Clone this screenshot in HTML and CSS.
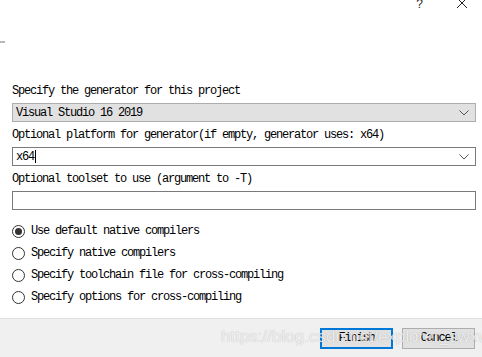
FILE: index.html
```html
<!DOCTYPE html>
<html lang="en">
<head>
    <meta charset="UTF-8">
    <title>CMake Setup</title>
    <link rel="stylesheet" href="styles.css">
</head>
<body>
    <div class="titlebar">
        <span class="help">?</span>
        <span class="close">
            <svg width="12" height="12" viewBox="0 0 12 12"><path d="M1 1L11 11M11 1L1 11" stroke="#222" stroke-width="1"/></svg>
        </span>
    </div>
    <div class="dash"></div>

    <div class="content">
        <div class="label">Specify the generator for this project</div>
        <div class="combo combo-gray">
            <span>Visual Studio 16 2019</span>
            <svg class="arrow" width="10" height="6" viewBox="0 0 10 6"><path d="M0.5 0.5L5 5L9.5 0.5" fill="none" stroke="#555"/></svg>
        </div>

        <div class="label">Optional platform for generator(if empty, generator uses: x64)</div>
        <div class="combo combo-edit">
            <span>x64<i class="caret"></i></span>
            <svg class="arrow" width="10" height="6" viewBox="0 0 10 6"><path d="M0.5 0.5L5 5L9.5 0.5" fill="none" stroke="#555"/></svg>
        </div>

        <div class="label">Optional toolset to use (argument to -T)</div>
        <div class="combo combo-edit"></div>

        <div class="radios">
            <div class="radio"><span class="dot checked"></span>Use default native compilers</div>
            <div class="radio"><span class="dot"></span>Specify native compilers</div>
            <div class="radio"><span class="dot"></span>Specify toolchain file for cross-compiling</div>
            <div class="radio"><span class="dot"></span>Specify options for cross-compiling</div>
        </div>
    </div>

    <div class="footer">
        <button class="btn btn-default">Finish</button>
        <button class="btn">Cancel</button>
        <span class="watermark">https://blog.csdn.net/explorer_swxw</span>
    </div>
</body>
</html>
```

FILE: styles.css
```css
body {
    margin: 0;
    width: 482px;
    height: 357px;
    background-color: #fff;
    font-family: "Liberation Mono", "DejaVu Sans Mono", monospace;
    font-size: 12px;
    letter-spacing: -1.2px;
    color: #000;
    overflow: hidden;
    position: relative;
}

.titlebar {
    height: 12px;
    display: flex;
    justify-content: flex-end;
    align-items: center;
    gap: 33px;
    padding-right: 14px;
}

.help {
    font-family: "Liberation Sans", Arial, sans-serif;
    font-size: 12px;
    letter-spacing: 0;
    color: #222;
    margin-top: -4px;
}

.close {
    display: flex;
    margin-top: -6px;
}

.dash {
    width: 5px;
    height: 2px;
    background-color: #b8b8b8;
    margin-top: 29px;
}

.content {
    padding: 41px 6px 0 12px;
}

.label {
    height: 14px;
    line-height: 14px;
}

.combo {
    box-sizing: border-box;
    height: 19px;
    margin: 5px 0 6px;
    border: 1px solid #adadad;
    display: flex;
    align-items: center;
    justify-content: space-between;
    padding: 0 6px 0 3px;
}

.combo-gray {
    background-color: #e1e1e1;
}

.combo-edit {
    border-color: #7a7a7a;
    background-color: #fff;
}

.caret {
    display: inline-block;
    width: 1px;
    height: 13px;
    background-color: #000;
    vertical-align: -3px;
    margin-left: 1px;
}

.arrow {
    display: block;
}

.radios {
    margin-top: 14px;
    display: flex;
    flex-direction: column;
    gap: 8px;
}

.radio {
    height: 14px;
    display: flex;
    align-items: center;
}

.dot {
    box-sizing: border-box;
    width: 13px;
    height: 13px;
    border: 1px solid #333;
    border-radius: 50%;
    margin-right: 6px;
    background-color: #fff;
    position: relative;
}

.dot.checked::after {
    content: "";
    position: absolute;
    left: 2px;
    top: 2px;
    width: 7px;
    height: 7px;
    border-radius: 50%;
    background-color: #333;
}

.footer {
    position: absolute;
    left: 0;
    right: 0;
    bottom: 0;
    height: 38px;
    background-color: #f0f0f0;
    border-top: 1px solid #dfdfdf;
    display: flex;
    justify-content: flex-end;
    align-items: center;
    gap: 9px;
    padding-right: 7px;
}

.btn {
    box-sizing: border-box;
    width: 73px;
    height: 21px;
    background-color: #e1e1e1;
    border: 1px solid #adadad;
    font-family: "Liberation Mono", "DejaVu Sans Mono", monospace;
    font-size: 12px;
    letter-spacing: -1.2px;
    color: #000;
    padding: 0;
}

.btn-default {
    border: 2px solid #0078d7;
}

.watermark {
    position: absolute;
    left: 221px;
    top: 8px;
    font-family: "Liberation Sans", Arial, sans-serif;
    font-size: 17px;
    letter-spacing: 0;
    color: rgba(255, 255, 255, 0.8);
    text-shadow: 0 0 1px rgba(0, 0, 0, 0.3);
    pointer-events: none;
}
```
